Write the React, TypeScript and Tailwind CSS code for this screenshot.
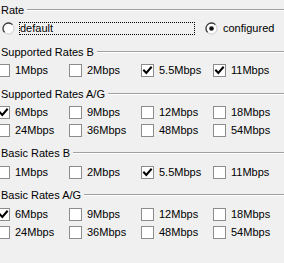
import React from "react";

const font = { fontFamily: '"Liberation Sans", Arial, sans-serif' };

function GroupLabel({ text, className = "" }: { text: string; className?: string }) {
  return (
    <div className={`flex items-center h-[18px] pl-[1px] ${className}`}>
      <span className="leading-[18px] whitespace-nowrap">{text}</span>
      <div className="flex-1 ml-[3px] border-t border-t-[#a0a0a0] border-b border-b-white" />
    </div>
  );
}

function CheckBox({ checked }: { checked: boolean }) {
  return (
    <div className="w-[13px] h-[13px] shrink-0 border border-[#8c8c8c] bg-white flex items-center justify-center">
      {checked && (
        <svg width="11" height="11" viewBox="0 0 11 11">
          <path d="M2 5.5 L4.3 8 L9 2.5" fill="none" stroke="#000" strokeWidth="2" strokeLinecap="square" />
        </svg>
      )}
    </div>
  );
}

function Check({ label, checked }: { label: string; checked?: boolean }) {
  return (
    <div className="flex items-center h-[18px]">
      <CheckBox checked={!!checked} />
      <span className="ml-[5px] leading-[18px] whitespace-nowrap">{label}</span>
    </div>
  );
}

function Radio({ checked }: { checked: boolean }) {
  return (
    <svg width="13" height="13" viewBox="0 0 13 13" className="shrink-0">
      <circle cx="6.5" cy="6.5" r="5.5" fill="#fff" stroke="#c8c8c8" strokeWidth="1" />
      <path d="M10.4 2.6 A5.5 5.5 0 0 0 2.6 10.4" fill="none" stroke="#3c3c3c" strokeWidth="1.3" />
      {checked && <circle cx="6.5" cy="6.5" r="2.3" fill="#111" />}
    </svg>
  );
}

function Grid({ items }: { items: [string, boolean][] }) {
  return (
    <div className="grid grid-cols-[72px_72px_72px_72px] ml-[-3px]">
      {items.map(([l, c]) => (
        <Check key={l} label={l} checked={c} />
      ))}
    </div>
  );
}

export default function App() {
  return (
    <div
      className="w-[284px] h-[263px] bg-[#f0f0f0] text-black text-[11px] overflow-hidden pt-[1px]"
      style={font}
    >
      <GroupLabel text="Rate" />
      <div className="flex items-center h-[18px]">
        <div className="ml-[2px]">
          <Radio checked={false} />
        </div>
        <div className="ml-[4px] w-[176px] h-[13px] border border-dotted border-black flex items-center">
          <span className="leading-[11px]">default</span>
        </div>
        <div className="ml-[10px]">
          <Radio checked={true} />
        </div>
        <span className="ml-[5px] leading-[18px]">configured</span>
      </div>

      <GroupLabel text="Supported Rates B" className="mt-[6px]" />
      <Grid
        items={[
          ["1Mbps", false],
          ["2Mbps", false],
          ["5.5Mbps", true],
          ["11Mbps", true],
        ]}
      />

      <GroupLabel text="Supported Rates A/G" className="mt-[6px]" />
      <Grid
        items={[
          ["6Mbps", true],
          ["9Mbps", false],
          ["12Mbps", false],
          ["18Mbps", false],
          ["24Mbps", false],
          ["36Mbps", false],
          ["48Mbps", false],
          ["54Mbps", false],
        ]}
      />

      <GroupLabel text="Basic Rates B" className="mt-[5px]" />
      <div className="pt-[1px]">
        <Grid
          items={[
            ["1Mbps", false],
            ["2Mbps", false],
            ["5.5Mbps", true],
            ["11Mbps", false],
          ]}
        />
      </div>

      <GroupLabel text="Basic Rates A/G" className="mt-[5px]" />
      <div className="pt-[1px]">
        <Grid
          items={[
            ["6Mbps", true],
            ["9Mbps", false],
            ["12Mbps", false],
            ["18Mbps", false],
            ["24Mbps", false],
            ["36Mbps", false],
            ["48Mbps", false],
            ["54Mbps", false],
          ]}
        />
      </div>
    </div>
  );
}
